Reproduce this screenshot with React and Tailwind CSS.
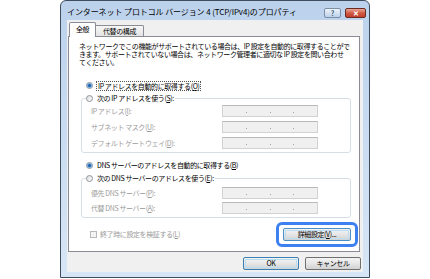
import React from "react";

const FONT = { fontFamily: '"Noto Sans CJK JP", "Noto Sans", sans-serif' };

function Mn({ children }) {
  return <span className="underline underline-offset-[1px]">{children}</span>;
}

function Radio({ checked }) {
  return (
    <span className="w-[7px] h-[7px] shrink-0 rounded-full border border-[#8f949a] bg-gradient-to-br from-[#dcdcdc] to-white flex items-center justify-center">
      {checked && <span className="w-[3px] h-[3px] rounded-full bg-[#1f5fa8] ring-1 ring-[#6ea7dc]" />}
    </span>
  );
}

function IpField() {
  return (
    <div className="w-[96px] h-[12px] mr-[32px] border border-[#d2d2d2] border-t-[#b9b9b9] bg-[#f0f0f0] flex justify-evenly items-center pt-[3px]">
      <span className="w-[1px] h-[1px] bg-[#a5a5a5]" />
      <span className="w-[1px] h-[1px] bg-[#a5a5a5]" />
      <span className="w-[1px] h-[1px] bg-[#a5a5a5]" />
    </div>
  );
}

function FieldRow({ label }) {
  return (
    <div className="flex items-center h-[12px]">
      <span className="flex-1 text-[#9a9a9a] whitespace-nowrap">{label}</span>
      <IpField />
    </div>
  );
}

function WinButton({ children, tone = "normal", className = "" }) {
  const border =
    tone === "default" ? "border-[#3c7fb1]" : tone === "focus" ? "border-[#4a8fc8]" : "border-[#707070]";
  return (
    <div
      className={`h-[13px] rounded-[2px] border ${border} p-[1px] bg-gradient-to-b from-[#f4f4f4] via-[#e6e6e6] to-[#d2d2d2] ${className}`}
    >
      <div
        className={`h-full rounded-[1px] flex items-center justify-center text-black whitespace-nowrap ${
          tone === "normal" ? "" : "shadow-[inset_0_0_0_1px_#b9def4]"
        }`}
      >
        {children}
      </div>
    </div>
  );
}

export default function App() {
  return (
    <div className="w-[430px] h-[279px] bg-white pl-[60px] overflow-hidden" style={FONT}>
      {/* window frame */}
      <div className="w-[310px] h-[278px] border border-[#3f4d5e] rounded-t-[6px] bg-gradient-to-b from-[#bcd2ec] via-[#c9dcf1] to-[#d7e6f6] flex flex-col">
        {/* title bar */}
        <div className="h-[19px] flex items-start justify-between pl-[6px] pr-[3px] pt-[6px]">
          <span className="text-[8px] leading-[10px] tracking-[-0.1px] text-black whitespace-nowrap">
            インターネット プロトコル バージョン 4 (TCP/IPv4)のプロパティ
          </span>
          <div className="flex gap-[4px] mt-[1px]">
            <div className="w-[17px] h-[10px] rounded-[2px] border border-[#7b8ea6] bg-gradient-to-b from-[#eef4fb] to-[#bcd0e8] flex items-center justify-center text-[7px] leading-none text-[#3d5673] font-bold">
              ?
            </div>
            <div className="w-[21px] h-[10px] rounded-[2px] border border-[#6b2b23] bg-gradient-to-b from-[#e9a899] via-[#cf5a46] to-[#c2402c] flex items-center justify-center text-[7px] leading-none text-white font-bold">
              ✕
            </div>
          </div>
        </div>

        {/* client area */}
        <div className="flex-1 mx-[6px] mb-[5px] bg-[#f0f0f0] flex flex-col pt-[2px] text-[7px] leading-[9px] tracking-[-0.4px] text-black">
          {/* tabs */}
          <div className="flex items-end h-[15px] ml-[2px] -mb-[1px] relative z-10">
            <div className="w-[27px] h-[15px] bg-white border border-b-0 border-[#898c95] rounded-t-[2px] flex items-start justify-center pt-[2px]">
              全般
            </div>
            <div className="w-[48px] h-[11px] mb-[1px] bg-gradient-to-b from-[#f7f7f7] to-[#e4e4e4] border border-b-0 border-l-0 border-[#898c95] rounded-tr-[2px] flex items-center justify-center">
              代替の構成
            </div>
          </div>

          {/* panel */}
          <div className="h-[216px] ml-[1px] mr-[3px] bg-white border border-[#898c95] flex flex-col">
            <p className="mt-[5px] ml-[10px] h-[24px] leading-[8px] whitespace-nowrap">
              ネットワークでこの機能がサポートされている場合は、IP 設定を自動的に取得することがで
              <br />
              きます。サポートされていない場合は、ネットワーク管理者に適切な IP 設定を問い合わせ
              <br />
              てください。
            </p>

            <div className="mt-[15px] ml-[17px] h-[9px] flex items-center gap-[4px]">
              <Radio checked />
              <span className="outline outline-1 outline-dotted outline-[#555] px-[1px] leading-[8px]">
                IP アドレスを自動的に取得する(<Mn>O</Mn>)
              </span>
            </div>

            <fieldset className="mt-[4px] ml-[12px] mr-[8px] border border-[#d5dfe5] rounded-[3px] pl-[4px] pb-[3px]">
              <legend className="h-[9px]">
                <span className="flex items-center gap-[4px] h-[9px] pr-[1px]">
                  <Radio />
                  <span>
                    次の IP アドレスを使う(<Mn>S</Mn>):
                  </span>
                </span>
              </legend>
              <div className="mt-[2px] pl-[5px] flex flex-col gap-[4px]">
                <FieldRow label={<>IP アドレス(<Mn>I</Mn>):</>} />
                <FieldRow label={<>サブネット マスク(<Mn>U</Mn>):</>} />
                <FieldRow label={<>デフォルト ゲートウェイ(<Mn>D</Mn>):</>} />
              </div>
            </fieldset>

            <div className="mt-[8px] ml-[17px] h-[9px] flex items-center gap-[4px]">
              <Radio checked />
              <span>
                DNS サーバーのアドレスを自動的に取得する(<Mn>B</Mn>)
              </span>
            </div>

            <fieldset className="mt-[4px] ml-[12px] mr-[8px] border border-[#d5dfe5] rounded-[3px] pl-[4px] pb-[3px]">
              <legend className="h-[9px]">
                <span className="flex items-center gap-[4px] h-[9px] pr-[1px]">
                  <Radio />
                  <span>
                    次の DNS サーバーのアドレスを使う(<Mn>E</Mn>):
                  </span>
                </span>
              </legend>
              <div className="mt-[4px] pl-[5px] flex flex-col gap-[3px]">
                <FieldRow label={<>優先 DNS サーバー(<Mn>P</Mn>):</>} />
                <FieldRow label={<>代替 DNS サーバー(<Mn>A</Mn>):</>} />
              </div>
            </fieldset>

            <div className="mt-[10px] h-[12px] flex items-center justify-between">
              <div className="ml-[21px] flex items-center gap-[3px] text-[#9a9a9a]">
                <span className="w-[7px] h-[7px] border border-[#b8b8b8] bg-[#f4f4f4]" />
                <span>
                  終了時に設定を検証する(<Mn>L</Mn>)
                </span>
              </div>
              <div className="relative mr-[8px]">
                <WinButton tone="focus" className="w-[68px] h-[12px]">
                  詳細設定(<Mn>V</Mn>)...
                </WinButton>
                <div className="absolute -left-[7px] -right-[7px] -top-[6px] -bottom-[6px] border-[3px] border-[#3d80ef] rounded-[6px]" />
              </div>
            </div>
          </div>

          {/* dialog buttons */}
          <div className="mt-[5px] flex justify-end gap-[6px] pr-[2px]">
            <WinButton tone="default" className="w-[56px]">
              OK
            </WinButton>
            <WinButton className="w-[56px]">キャンセル</WinButton>
          </div>
        </div>
      </div>
    </div>
  );
}
